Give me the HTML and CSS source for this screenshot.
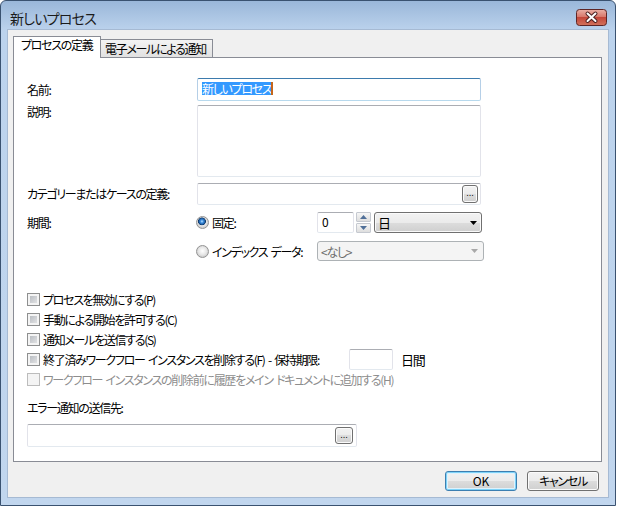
FILE: index.html
```html
<!DOCTYPE html>
<html lang="ja">
<head>
    <meta charset="UTF-8">
    <title>新しいプロセス</title>
    <link rel="stylesheet" href="styles.css">
</head>
<body>

<div class="window">
    <!-- Title bar -->
    <div class="titlebar">
        <span class="title">新しいプロセス</span>
        <span class="close-btn">
            <svg width="31" height="17" viewBox="0 0 31 17">
                <defs>
                    <linearGradient id="closeGrad" x1="0" y1="0" x2="0" y2="1">
                        <stop offset="0" stop-color="#eab0a6"/>
                        <stop offset="0.45" stop-color="#d8796c"/>
                        <stop offset="0.5" stop-color="#c4473a"/>
                        <stop offset="1" stop-color="#d2735c"/>
                    </linearGradient>
                </defs>
                <rect x="0.5" y="0.5" width="30" height="16" rx="3" fill="url(#closeGrad)" stroke="#5e2626"/>
                <path d="M11.5 4.5 L19.5 12 M19.5 4.5 L11.5 12" stroke="#4b2020" stroke-width="4" stroke-linecap="round"/>
                <path d="M11.5 4.5 L19.5 12 M19.5 4.5 L11.5 12" stroke="#fff" stroke-width="2" stroke-linecap="round"/>
            </svg>
        </span>
    </div>

    <div class="client">
        <!-- Tabs -->
        <div class="tabs">
            <div class="tab active">プロセスの定義</div>
            <div class="tab">電子メールによる通知</div>
        </div>

        <div class="tab-panel">
            <div class="form-row row-name">
                <span class="field-label">名前:</span>
                <div class="textbox focused name-box"><span class="selected-text">新しいプロセス</span><span class="caret"></span></div>
            </div>
            <div class="form-row row-desc">
                <span class="field-label">説明:</span>
                <div class="textbox multiline"></div>
            </div>
            <div class="form-row row-category">
                <span class="field-label">カテゴリーまたはケースの定義:</span>
                <div class="textbox browse category-box"><span class="dots-btn">...</span></div>
            </div>
            <div class="form-row row-duration">
                <span class="field-label">期間:</span>
                <div class="duration">
                    <div class="duration-row">
                        <span class="radio-option"><span class="radio checked"></span>固定:</span>
                        <div class="textbox spin-box">0</div>
                        <div class="spin-buttons">
                            <span class="spin-btn"><svg width="7" height="4" viewBox="0 0 7 4"><path d="M0 4 L3.5 0 L7 4Z" fill="#4f6f98"/></svg></span>
                            <span class="spin-btn"><svg width="7" height="4" viewBox="0 0 7 4"><path d="M0 0 L7 0 L3.5 4Z" fill="#4f6f98"/></svg></span>
                        </div>
                        <div class="combo unit-combo">
                            <span>日</span>
                            <svg width="7" height="4" viewBox="0 0 7 4"><path d="M0 0 L7 0 L3.5 4Z" fill="#000"/></svg>
                        </div>
                    </div>
                    <div class="duration-row short">
                        <span class="radio-option"><span class="radio"></span>インデックス データ:</span>
                        <div class="combo disabled index-combo">
                            <span>&lt;なし&gt;</span>
                            <svg width="7" height="4" viewBox="0 0 7 4"><path d="M0 0 L7 0 L3.5 4Z" fill="#a8a8a8"/></svg>
                        </div>
                    </div>
                </div>
            </div>

            <!-- Options -->
            <div class="checks">
                <div class="check-row"><span class="checkbox"></span>プロセスを無効にする(P)</div>
                <div class="check-row"><span class="checkbox"></span>手動による開始を許可する(C)</div>
                <div class="check-row"><span class="checkbox"></span>通知メールを送信する(S)</div>
                <div class="check-row">
                    <span class="checkbox"></span>
                    <span class="retention-label">終了済みワークフロー インスタンスを削除する(F) - 保持期限:</span>
                    <div class="textbox days-box"></div>
                    <span class="days-unit">日間</span>
                </div>
                <div class="check-row disabled"><span class="checkbox"></span>ワークフロー インスタンスの削除前に履歴をメイン ドキュメントに追加する(H)</div>
            </div>

            <div class="error-label">エラー通知の送信先:</div>
            <div class="textbox browse error-box"><span class="dots-btn">...</span></div>
        </div>

        <div class="dialog-buttons">
            <span class="button default">OK</span>
            <span class="button">キャンセル</span>
        </div>
    </div>
</div>

</body>
</html>
```

FILE: styles.css
```css
* {
    box-sizing: border-box;
}
body {
    margin: 0;
    background: #fff;
    font-family: "Noto Sans CJK JP", "Noto Sans", sans-serif;
    font-size: 12px;
    font-feature-settings: "palt";
    letter-spacing: -1.3px;
    word-spacing: 2px;
    color: #000;
}
.window {
    width: 616px;
    height: 506px;
    border: 1px solid #3a5270;
    border-radius: 6px 6px 0 0;
    background: linear-gradient(180deg, #9ab7d9 0, #bcd3ed 30px, #c1d6ee 100%);
    display: flex;
    flex-direction: column;
}
.titlebar {
    height: 29px;
    display: flex;
    align-items: flex-start;
    padding: 8px 8px 0 9px;
}
.title {
    flex: 1;
    font-size: 14px;
    line-height: 18px;
    letter-spacing: -0.8px;
    color: #1b1b1b;
}
.close-btn {
    display: flex;
}
.client {
    flex: 1;
    margin: 0 7px 8px;
    background: #f0f0f0;
    box-shadow: 0 0 0 1px #a6bad3;
    display: flex;
    flex-direction: column;
}

/* Tabs */
.tabs {
    display: flex;
    align-items: flex-end;
    height: 28px;
    padding-left: 5px;
    margin-bottom: -1px;
}
.tab {
    height: 19px;
    width: 113px;
    margin-left: -1px;
    padding-left: 4px;
    line-height: 17px;
    border: 1px solid #898c95;
    border-bottom: none;
    background: linear-gradient(#f3f3f3, #e0e0e0);
    white-space: nowrap;
}
.tab.active {
    height: 22px;
    width: 88px;
    margin-left: 0;
    padding-left: 7px;
    line-height: 16px;
    background: #fff;
    position: relative;
    z-index: 1;
}
.tab-panel {
    height: 405px;
    margin: 0 6px 0 5px;
    border: 1px solid #898c95;
    background: #fff;
    padding: 20px 0 0 13px;
}

/* Form rows */
.form-row {
    display: flex;
    align-items: center;
}
.field-label {
    width: 170px;
    flex: none;
    line-height: 14px;
}
.row-name {
    margin-bottom: 4px;
}
.row-desc {
    align-items: flex-start;
    margin-bottom: 6px;
}
.row-category {
    margin-bottom: 7px;
}
.row-duration {
    align-items: flex-start;
}
.row-duration .field-label {
    line-height: 21px;
}

.textbox {
    border: 1px solid #e2e3ea;
    border-top-color: #abadb3;
    border-bottom-color: #e3e9ef;
    border-radius: 2px;
    background: #fff;
}
.textbox.focused {
    border-color: #b5cfe7;
    border-top-color: #3d7bad;
    border-bottom-color: #b7d9ed;
}
.name-box {
    width: 284px;
    height: 23px;
    display: flex;
    align-items: center;
    padding: 0 0 2px 4px;
}
.selected-text {
    background: #3399ff;
    color: #fff;
    line-height: 13px;
}
.caret {
    width: 2px;
    height: 13px;
    background: #c4661c;
}
.multiline {
    width: 284px;
    height: 72px;
}
.browse {
    display: flex;
    justify-content: flex-end;
    align-items: center;
    padding-right: 2px;
}
.category-box {
    width: 284px;
    height: 22px;
}
.dots-btn {
    width: 16px;
    height: 18px;
    border: 1px solid #707070;
    border-radius: 3px;
    background: linear-gradient(#f2f2f2 0, #ebebeb 50%, #dddddd 50%, #cfcfcf 100%);
    box-shadow: inset 0 0 0 1px #fbfbfb;
    font-family: "DejaVu Sans", sans-serif;
    font-size: 8px;
    line-height: 16px;
    letter-spacing: 0;
    text-align: center;
}

/* Duration */
.duration {
    display: flex;
    flex-direction: column;
    gap: 8px;
}
.duration-row {
    display: flex;
    align-items: center;
    height: 21px;
}
.duration-row.short {
    height: 20px;
}
.radio-option {
    width: 121px;
    margin-left: -1px;
    display: flex;
    align-items: center;
    gap: 3px;
    white-space: nowrap;
}
.radio {
    width: 13px;
    height: 13px;
    border-radius: 50%;
    border: 1px solid #939393;
    background: radial-gradient(circle at 50% 45%, #ffffff 0, #e6e6e6 4px, #cdcdcd 6px);
}
.radio.checked {
    background: radial-gradient(circle at 45% 40%, #bfe6ff 0, #3e8fe0 1.5px, #1d5b9e 3px, #0c3567 3.6px, transparent 4.2px),
        radial-gradient(circle at 50% 45%, #ffffff 0, #e6e6e6 4px, #cdcdcd 6px);
}
.spin-box {
    width: 37px;
    height: 21px;
    padding-left: 4px;
    line-height: 18px;
    letter-spacing: 0;
}
.spin-buttons {
    margin-left: 2px;
    display: flex;
    flex-direction: column;
    gap: 1px;
}
.spin-btn {
    width: 15px;
    height: 10px;
    border: 1px solid #c5c9d0;
    border-radius: 1px;
    background: linear-gradient(#f6f6f6, #dedede);
    display: flex;
    align-items: center;
    justify-content: center;
}
.combo {
    display: flex;
    align-items: center;
    justify-content: space-between;
    padding: 0 4px 0 3px;
    border-radius: 3px;
}
.unit-combo {
    width: 108px;
    height: 21px;
    margin-left: 3px;
    border: 1px solid #707070;
    background: linear-gradient(#f2f2f2 0, #ebebeb 50%, #dddddd 50%, #cfcfcf 100%);
    box-shadow: inset 0 0 0 1px #fafafa;
    font-size: 13px;
}
.combo.disabled {
    width: 167px;
    height: 20px;
    border: 1px solid #adb2b5;
    background: #f4f4f4;
    color: #6d6d6d;
    padding-right: 5px;
}

/* Checkboxes */
.checks {
    margin-top: 28px;
}
.check-row {
    display: flex;
    align-items: center;
    height: 20px;
    white-space: nowrap;
}
.checkbox {
    width: 13px;
    height: 13px;
    margin-right: 3px;
    flex: none;
    border: 1px solid #8e8f8f;
    background: linear-gradient(135deg, #aeb3b9, #ececed);
    box-shadow: inset 0 0 0 2px #f4f4f4;
}
.check-row.disabled {
    color: #8d8d8d;
}
.check-row.disabled .checkbox {
    border-color: #bcbcbc;
    background: #f4f4f4;
    box-shadow: none;
}
.retention-label {
    width: 306px;
}
.days-box {
    width: 44px;
    height: 21px;
}
.days-unit {
    margin-left: 8px;
    font-size: 13px;
}

/* Error notification */
.error-label {
    margin-top: 11px;
    line-height: 16px;
}
.error-box {
    width: 330px;
    height: 23px;
    margin-top: 8px;
    padding-right: 3px;
}
.error-box .dots-btn {
    width: 18px;
    height: 17px;
    line-height: 15px;
}

/* Dialog buttons */
.dialog-buttons {
    display: flex;
    justify-content: flex-end;
    gap: 10px;
    padding: 9px 9px 0 0;
}
.button {
    width: 72px;
    height: 20px;
    border: 1px solid #707070;
    border-radius: 3px;
    background: linear-gradient(#f2f2f2 0, #ebebeb 50%, #dddddd 50%, #cfcfcf 100%);
    box-shadow: inset 0 0 0 1px #fbfbfb;
    text-align: center;
    line-height: 17px;
}
.button.default {
    border-color: #3c7fb1;
    letter-spacing: 0;
    box-shadow: inset 0 0 0 1px #7fd3f8, inset 0 0 0 2px #dff2fc;
}
```
